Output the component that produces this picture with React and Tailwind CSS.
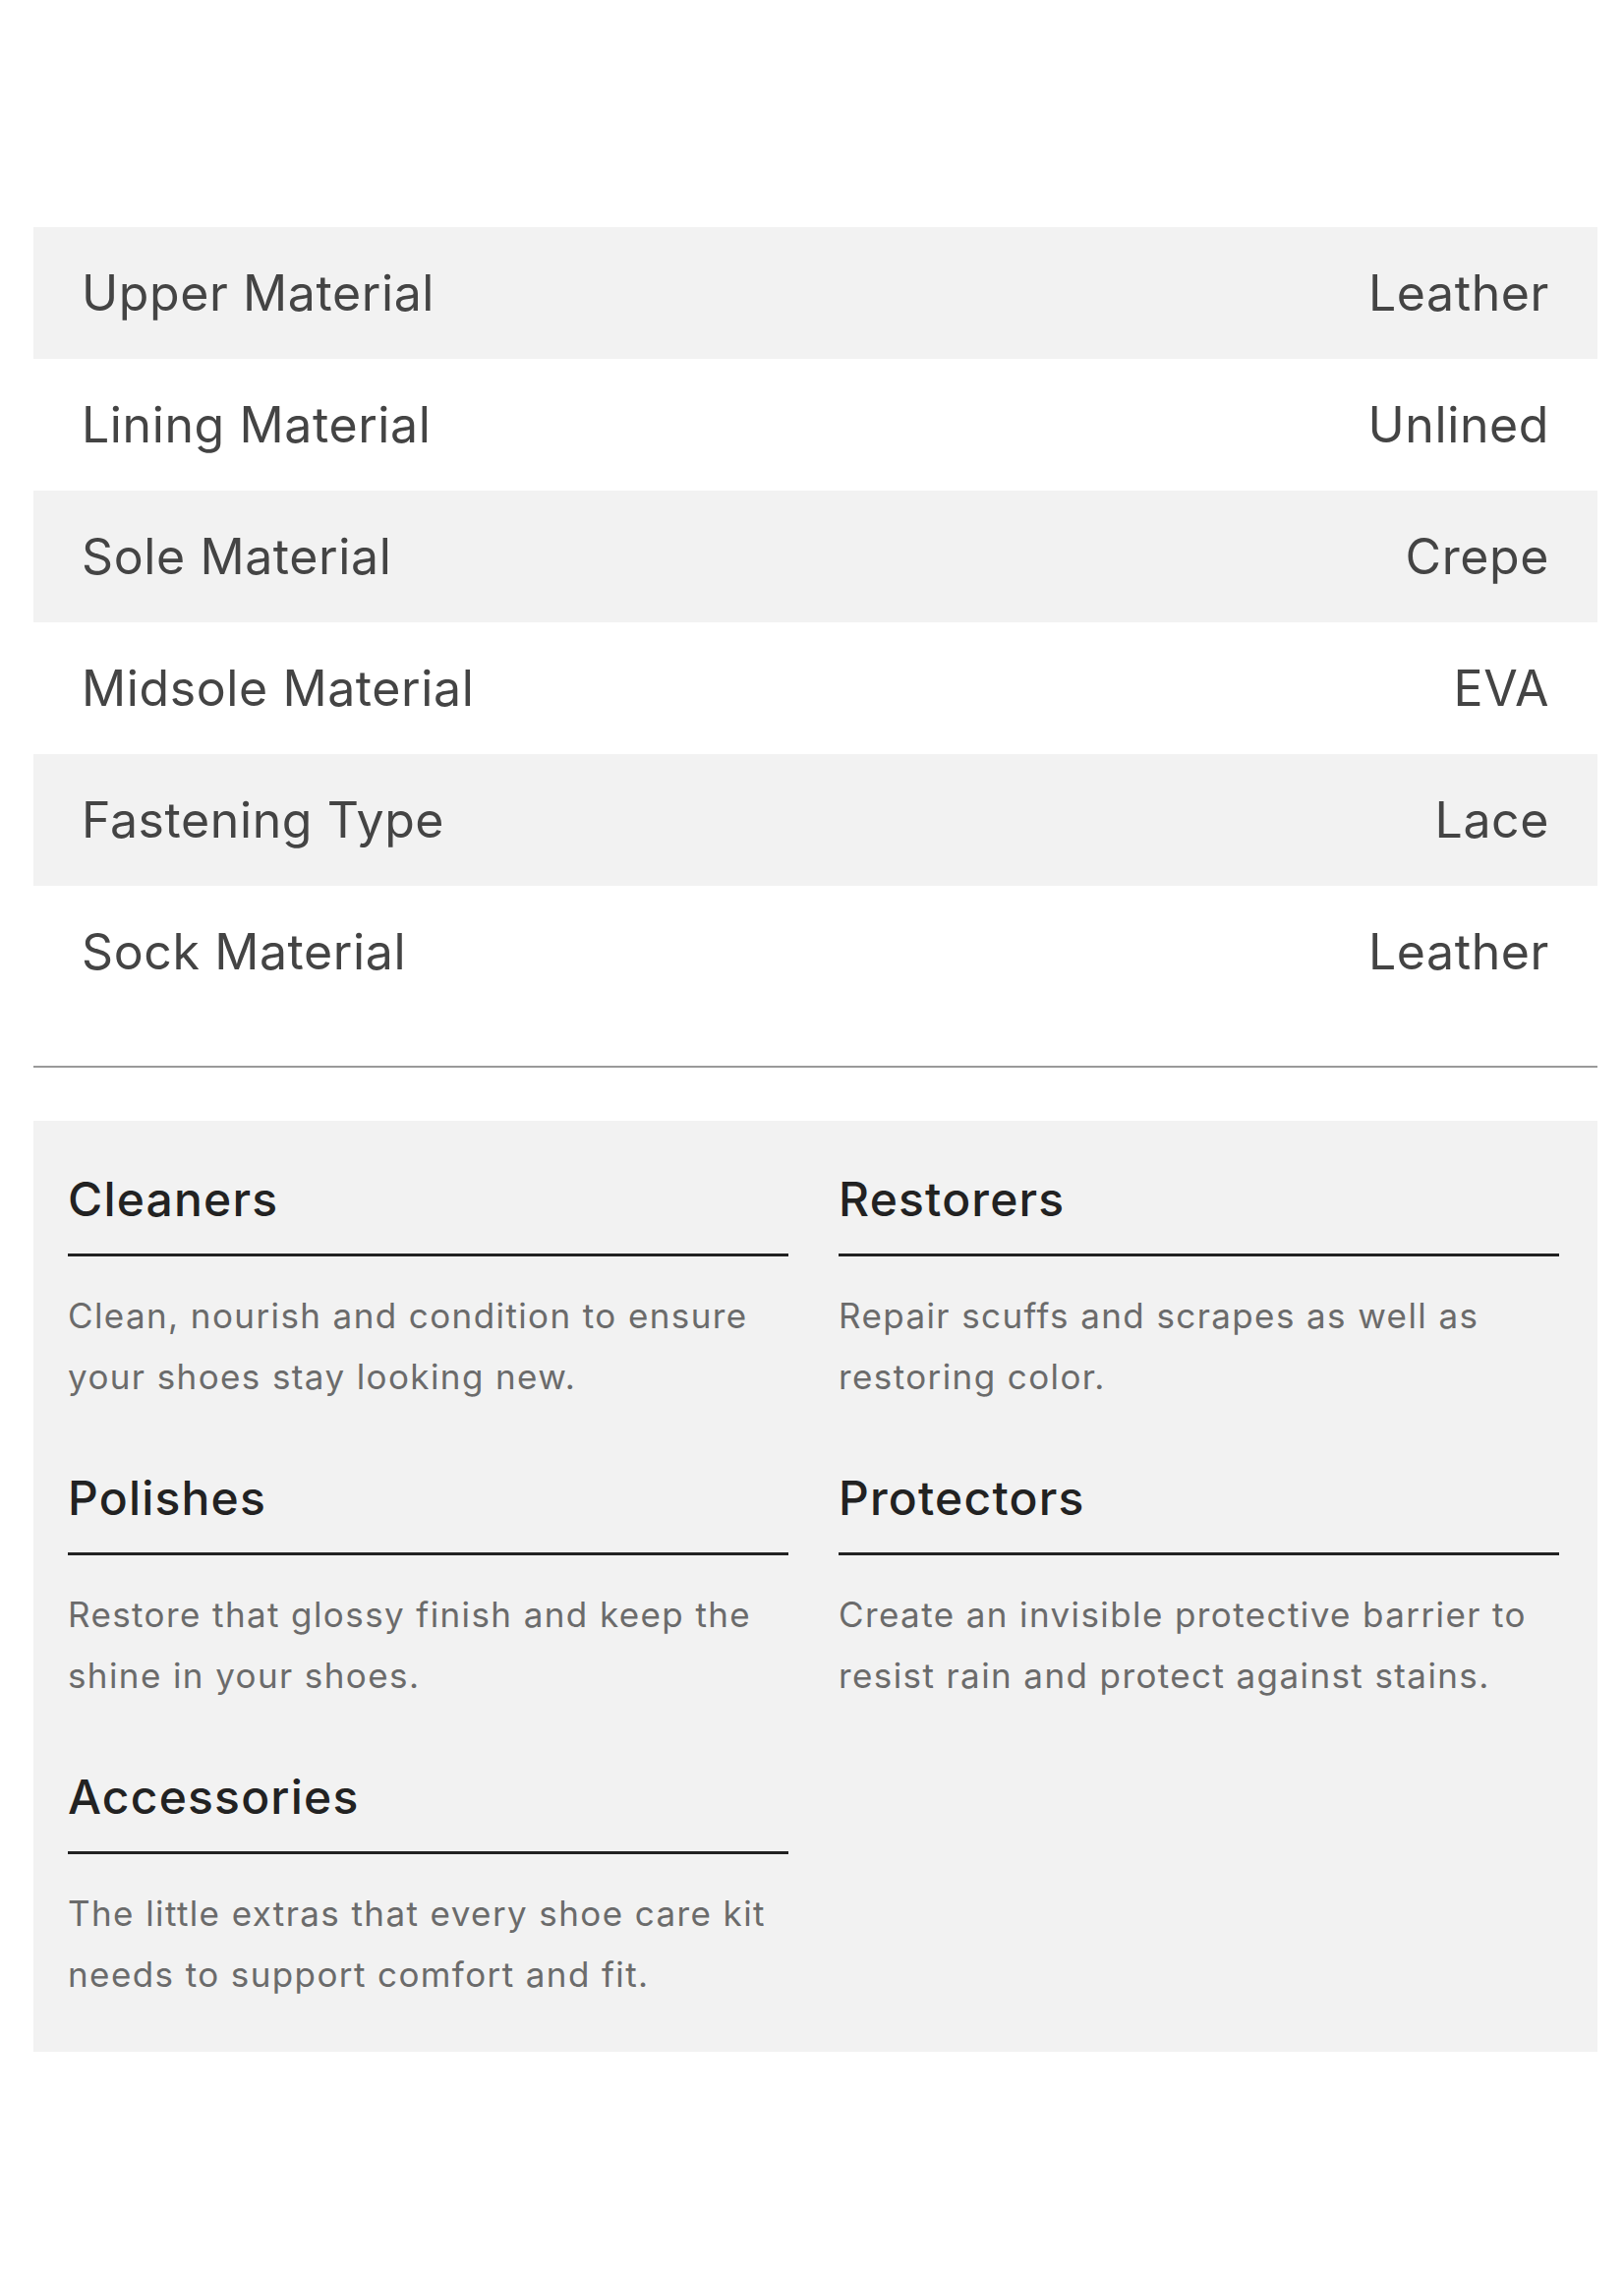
import React from 'react';

const specs = [
  { label: 'Upper Material', value: 'Leather' },
  { label: 'Lining Material', value: 'Unlined' },
  { label: 'Sole Material', value: 'Crepe' },
  { label: 'Midsole Material', value: 'EVA' },
  { label: 'Fastening Type', value: 'Lace' },
  { label: 'Sock Material', value: 'Leather' },
];

const careItems = [
  { title: 'Cleaners', text: 'Clean, nourish and condition to ensure your shoes stay looking new.' },
  { title: 'Restorers', text: 'Repair scuffs and scrapes as well as restoring color.' },
  { title: 'Polishes', text: 'Restore that glossy finish and keep the shine in your shoes.' },
  { title: 'Protectors', text: 'Create an invisible protective barrier to resist rain and protect against stains.' },
  { title: 'Accessories', text: 'The little extras that every shoe care kit needs to support comfort and fit.' },
];

const App = () => {
  return (
    <div className="min-h-screen bg-white pt-[231px] px-[34px] pr-[27px] font-['Inter','Liberation_Sans',sans-serif]">
      {/* Spec table */}
      <div>
        {specs.map((row, index) => (
          <div
            key={row.label}
            className={`flex h-[134px] items-center justify-between px-[49px] text-[50px] tracking-[0.012em] text-[#444] ${
              index % 2 === 0 ? 'bg-[#f2f2f2]' : 'bg-white'
            }`}
          >
            <span>{row.label}</span>
            <span>{row.value}</span>
          </div>
        ))}
      </div>

      <div className="mt-[49px] h-[2px] bg-[#9a9a9a]" />

      {/* Shoe care */}
      <div className="mt-[54px] grid grid-cols-2 gap-x-[51px] gap-y-[64px] bg-[#f2f2f2] pl-[35px] pr-[39px] pt-[51px] pb-[48px]">
        {careItems.map((item) => (
          <div key={item.title}>
            <h3 className="border-b-[3px] border-[#222] pb-[26px] text-[48px] font-medium leading-[58px] tracking-[0.025em] text-[#222]">
              {item.title}
            </h3>
            <p className="mt-[29px] text-[35px] leading-[62px] tracking-[0.04em] text-[#6b6b6b]">{item.text}</p>
          </div>
        ))}
      </div>
    </div>
  );
};

export default App;
